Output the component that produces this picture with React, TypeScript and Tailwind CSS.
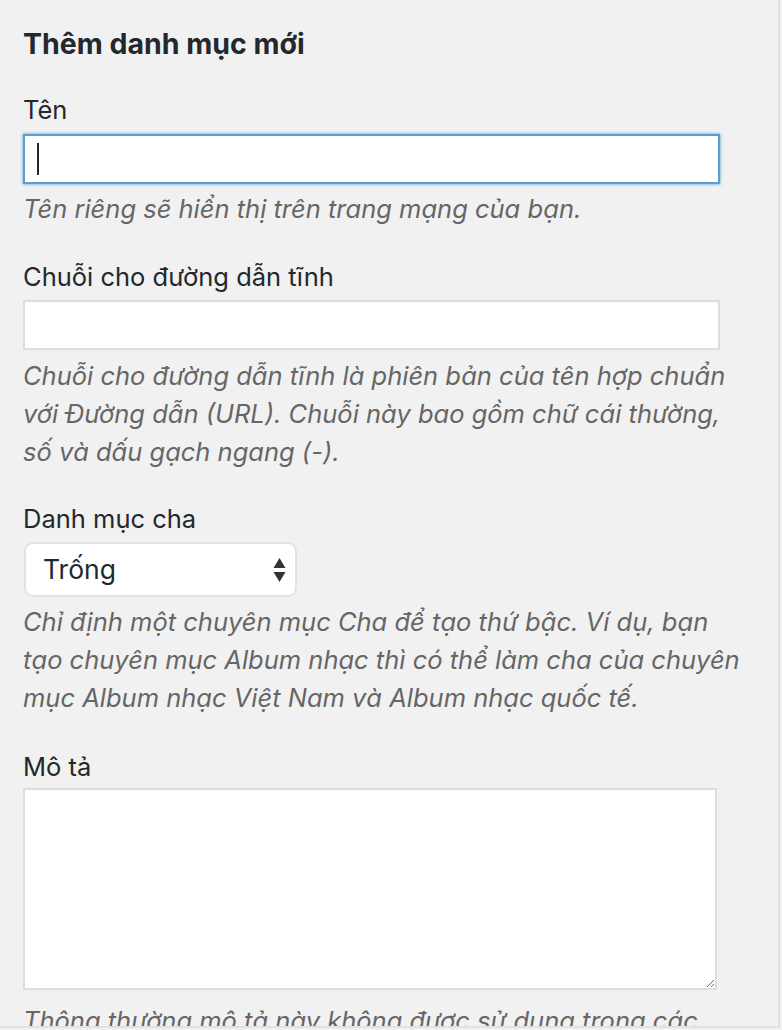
import React from 'react';

const font = { fontFamily: 'Inter, "Liberation Sans", Arial, sans-serif' };

export default function App() {
  return (
    <div className="w-[782px] h-[1030px] overflow-hidden bg-[#f1f1f1] text-[#23282d]" style={font}>
      <div className="w-[780px] h-[1028px] border-r-2 border-b-2 border-[#e2e2e2] pl-[23px] pr-[30px] overflow-hidden">
        <h2 className="mt-[24px] text-[28.5px] leading-[40px] font-bold">Thêm danh mục mới</h2>

        {/* Tên */}
        <label className="block mt-[28px] text-[25.5px] leading-[36px]">Tên</label>
        <div className="mt-[6px] w-[697px] h-[50px] bg-white border-2 border-[#5b9dd9] shadow-[0_0_3px_rgba(30,140,190,0.8)] flex items-center pl-[12px]">
          <span className="w-[2px] h-[32px] bg-[#23282d]"></span>
        </div>
        <p className="mt-[6px] text-[25.5px] leading-[38px] italic text-[#666]">
          Tên riêng sẽ hiển thị trên trang mạng của bạn.
        </p>

        {/* Slug */}
        <label className="block mt-[31px] text-[25.5px] leading-[36px]">Chuỗi cho đường dẫn tĩnh</label>
        <input
          type="text"
          className="block mt-[5px] w-[697px] h-[50px] bg-white border-2 border-[#dddddd] outline-none"
        />
        <p className="mt-[7px] text-[25.5px] leading-[38px] italic text-[#666]">
          Chuỗi cho đường dẫn tĩnh là phiên bản của tên hợp chuẩn với Đường dẫn (URL). Chuỗi này bao gồm chữ cái thường, số và dấu gạch ngang (-).
        </p>

        {/* Parent */}
        <label className="block mt-[30px] text-[25.5px] leading-[36px]">Danh mục cha</label>
        <div className="mt-[5px] ml-[1px] w-[273px] h-[55px] bg-white border-2 border-[#e3e3e3] rounded-[9px] flex items-center justify-between pl-[17px] pr-[9px]">
          <span className="text-[26.5px]">Trống</span>
          <svg width="13" height="26" viewBox="0 0 13 26">
            <path d="M6.5 1 L12.5 11 L0.5 11 Z" fill="#333" />
            <path d="M6.5 25 L12.5 15 L0.5 15 Z" fill="#333" />
          </svg>
        </div>
        <p className="mt-[6px] text-[25.5px] leading-[38px] italic text-[#666]">
          Chỉ định một chuyên mục Cha để tạo thứ bậc. Ví dụ, bạn tạo chuyên mục Album nhạc thì có thể làm cha của chuyên mục Album nhạc Việt Nam và Album nhạc quốc tế.
        </p>

        {/* Description */}
        <label className="block mt-[32px] text-[25.5px] leading-[36px]">Mô tả</label>
        <textarea className="block mt-[3px] w-[694px] h-[202px] bg-white border-2 border-[#dddddd] outline-none resize-y"></textarea>
        <p className="mt-[12px] text-[25.5px] leading-[38px] italic text-[#666]">
          Thông thường mô tả này không được sử dụng trong các giao diện, tuy nhiên có vài giao diện có thể hiển thị mô tả này.
        </p>
      </div>
    </div>
  );
}
